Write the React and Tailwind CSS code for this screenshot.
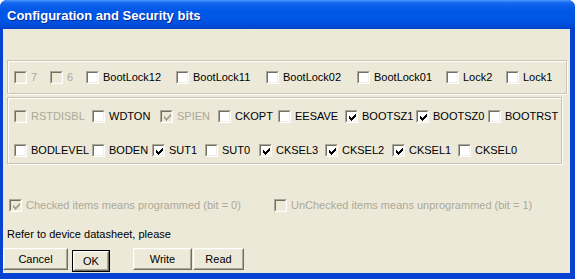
import React from 'react';

const font = "font-['Liberation_Sans',Arial,sans-serif]";

const Check = ({ color }) => (
    <svg className="absolute left-0 top-0" width="13" height="13" viewBox="0 0 13 13" shapeRendering="crispEdges">
        <path
            fill={color}
            d="M3 5h1v3H3z M4 6h1v3H4z M5 7h1v3H5z M6 6h1v3H6z M7 5h1v3H7z M8 4h1v3H8z M9 3h1v3H9z"
        />
    </svg>
);

const Box = ({ checked, disabled }) => (
    <span className="relative block w-[13px] h-[13px] shrink-0 border border-t-[#ACA899] border-l-[#ACA899] border-b-white border-r-white">
        <span
            className={`block w-full h-full border border-t-[#716F64] border-l-[#716F64] border-b-[#F1EFE2] border-r-[#F1EFE2] ${
                disabled ? 'bg-[#ECE9D8]' : 'bg-white'
            }`}
        />
        {checked && <Check color={disabled ? '#ACA899' : '#000000'} />}
    </span>
);

const Item = ({ label, w, checked, disabled }) => (
    <div className={`flex items-center h-[14px] shrink-0 ${w}`}>
        <Box checked={checked} disabled={disabled} />
        <span className={`ml-[4px] text-[11px] leading-[14px] whitespace-nowrap ${disabled ? 'text-[#ACA899]' : 'text-black'}`}>
            {label}
        </span>
    </div>
);

const lockBits = [
    { label: '7', w: 'w-[36px]', disabled: true },
    { label: '6', w: 'w-[36px]', disabled: true },
    { label: 'BootLock12', w: 'w-[90px]' },
    { label: 'BootLock11', w: 'w-[90px]' },
    { label: 'BootLock02', w: 'w-[91px]' },
    { label: 'BootLock01', w: 'w-[89px]' },
    { label: 'Lock2', w: 'w-[60px]' },
    { label: 'Lock1', w: 'w-[50px]' },
];

const fuseHigh = [
    { label: 'RSTDISBL', w: 'w-[78px]', disabled: true },
    { label: 'WDTON', w: 'w-[68px]' },
    { label: 'SPIEN', w: 'w-[58px]', disabled: true, checked: true },
    { label: 'CKOPT', w: 'w-[60px]' },
    { label: 'EESAVE', w: 'w-[67px]' },
    { label: 'BOOTSZ1', w: 'w-[71px]', checked: true },
    { label: 'BOOTSZ0', w: 'w-[72px]', checked: true },
    { label: 'BOOTRST', w: 'w-[66px]' },
];

const fuseLow = [
    { label: 'BODLEVEL', w: 'w-[78px]' },
    { label: 'BODEN', w: 'w-[60px]' },
    { label: 'SUT1', w: 'w-[53px]', checked: true },
    { label: 'SUT0', w: 'w-[54px]' },
    { label: 'CKSEL3', w: 'w-[66px]', checked: true },
    { label: 'CKSEL2', w: 'w-[67px]', checked: true },
    { label: 'CKSEL1', w: 'w-[66px]', checked: true },
    { label: 'CKSEL0', w: 'w-[60px]' },
];

const groupBox = 'ml-[4px] border border-[#C8C5B5] shadow-[inset_1px_1px_0_#ffffff,1px_1px_0_#ffffff]';

const Button = ({ children, w, isDefault }) => (
    <button
        className={`${w} h-[22px] shrink-0 bg-[#ECE9D8] text-[11px] text-black ${
            isDefault ? 'border border-black' : ''
        }`}
    >
        <span className="flex items-center justify-center w-full h-full border border-t-white border-l-white border-b-[#716F64] border-r-[#716F64]">
            <span className="flex items-center justify-center w-full h-full border border-t-[#F1EFE2] border-l-[#F1EFE2] border-b-[#ACA899] border-r-[#ACA899]">
                {children}
            </span>
        </span>
    </button>
);

export default function App() {
    return (
        <div className={`w-[575px] h-[279px] flex flex-col bg-[#0842D2] rounded-t-[7px] overflow-hidden ${font}`}>
            {/* Title bar */}
            <div className="h-[29px] shrink-0 flex items-center pl-[7px] pt-[3px] bg-[linear-gradient(to_bottom,#4A9BFF_0%,#1466F0_10%,#0058E8_35%,#0055E5_70%,#0049D6_92%,#0040C4_100%)]">
                <span className="text-[13px] font-bold text-white [text-shadow:1px_1px_0_#0A2A9A]">
                    Configuration and Security bits
                </span>
            </div>

            {/* Client area */}
            <div className="flex-1 ml-[3px] mr-[5px] mb-[6px] bg-[#ECE9D8] flex flex-col">
                <div className={`${groupBox} mt-[31px] w-[560px] h-[34px] flex items-center pl-[6px]`}>
                    {lockBits.map((b) => (
                        <Item key={b.label} {...b} />
                    ))}
                </div>

                <div className={`${groupBox} mt-[3px] w-[555px] h-[67px] flex flex-col gap-[20px] pt-[11px] pl-[6px]`}>
                    <div className="flex">
                        {fuseHigh.map((b) => (
                            <Item key={b.label} {...b} />
                        ))}
                    </div>
                    <div className="flex">
                        {fuseLow.map((b) => (
                            <Item key={b.label} {...b} />
                        ))}
                    </div>
                </div>

                <div className="mt-[34px] ml-[6px] flex">
                    <Item label="Checked items means programmed (bit = 0)" w="w-[265px]" checked disabled />
                    <Item label="UnChecked items means unprogrammed (bit = 1)" w="w-[280px]" disabled />
                </div>

                <div className="mt-[15px] pl-[4px] text-[11px] leading-[14px] text-black">
                    Refer to device datasheet, please
                </div>

                <div className="mt-[7px] flex">
                    <Button w="w-[65px]">Cancel</Button>
                    <div className="ml-[4px]">
                        <Button w="w-[38px]" isDefault>
                            OK
                        </Button>
                    </div>
                    <div className="ml-[23px] flex gap-[1px]">
                        <Button w="w-[59px]">Write</Button>
                        <Button w="w-[51px]">Read</Button>
                    </div>
                </div>
            </div>
        </div>
    );
}
